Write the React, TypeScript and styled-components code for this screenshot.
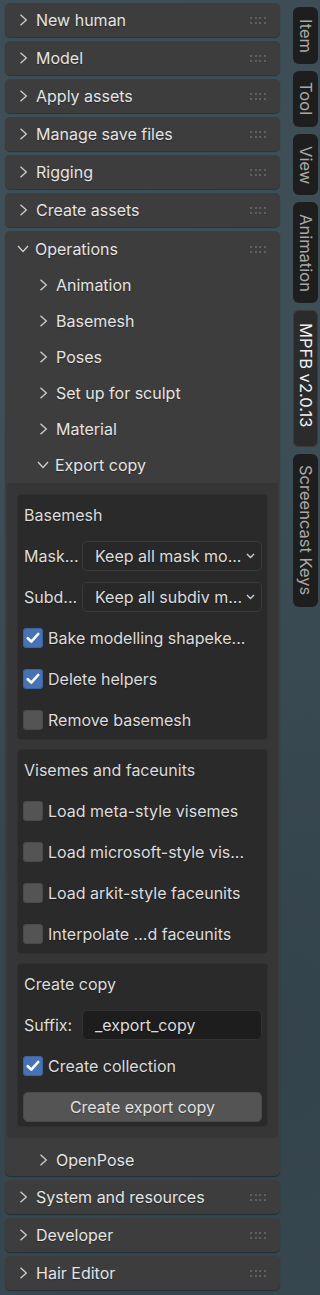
import React from 'react';
import styled, { createGlobalStyle } from 'styled-components';

const GlobalStyle = createGlobalStyle`
  body {
    margin: 0;
    background: #3a4a53;
    font-family: Inter, "Noto Sans", sans-serif;
    -webkit-font-smoothing: antialiased;
  }
`;

const Frame = styled.div`
  display: flex;
  align-items: flex-start;
  min-height: 1295px;
  padding: 3px 0 0 5px;
  box-sizing: border-box;
  background:
    radial-gradient(circle at 30% 20%, rgba(80, 100, 110, 0.25), transparent 60%),
    radial-gradient(circle at 80% 80%, rgba(40, 55, 62, 0.35), transparent 60%),
    #3a4a53;
`;

const Column = styled.div`
  display: flex;
  flex-direction: column;
  gap: 4px;
  width: 275px;
`;

const Panel = styled.section`
  background: #3d3d3d;
  border-radius: 5px;
  box-shadow: 0 1px 1px rgba(0, 0, 0, 0.35);
`;

const Header = styled.div<{ $h: number; $indent: number; $top?: number }>`
  display: flex;
  align-items: center;
  box-sizing: border-box;
  height: ${({ $h }) => $h}px;
  padding: ${({ $top = 0 }) => $top}px 14px 0 ${({ $indent }) => $indent}px;
  color: #e4e4e4;
  font-size: 16px;
  text-shadow: 0 1px 1px rgba(0, 0, 0, 0.35);
`;

const Title = styled.span<{ $open?: boolean }>`
  flex: 1;
  margin-left: ${({ $open }) => ($open ? 6 : 8)}px;
  white-space: nowrap;
`;

const Grip = styled.div`
  display: grid;
  grid-template-columns: repeat(4, 2px);
  grid-auto-rows: 2px;
  column-gap: 2.7px;
  row-gap: 3.5px;
  margin-top: 1px;
  span {
    background: #6c6c6c;
    border-radius: 1px;
  }
`;

const SubBody = styled.div`
  display: flex;
  flex-direction: column;
  gap: 9px;
  margin: 0 2px;
  padding: 11px 10px 11px;
  background: #363636;
  border-radius: 0 0 4px 4px;
`;

const Box = styled.div`
  display: flex;
  flex-direction: column;
  background: #2a2a2a;
  border-radius: 5px;
  box-shadow: inset 0 0 0 1px #303030;
  padding: 0 6px 0 7px;
`;

const Row = styled.div`
  display: flex;
  align-items: center;
  height: 41px;
  color: #dcdcdc;
  font-size: 16px;
  white-space: nowrap;
  text-shadow: 0 1px 1px rgba(0, 0, 0, 0.3);
`;

const Label = styled.span`
  width: 58px;
  flex: none;
`;

const Field = styled.div<{ $dark?: boolean }>`
  flex: 1;
  display: flex;
  align-items: center;
  height: 28px;
  padding: 0 6px 0 12px;
  background: ${({ $dark }) => ($dark ? '#1d1d1d' : '#282828')};
  border: 1px solid ${({ $dark }) => ($dark ? '#333' : '#3a3a3a')};
  border-radius: 5px;
  color: #dcdcdc;
  span {
    flex: 1;
  }
`;

const CheckBox = styled.span<{ $on?: boolean }>`
  display: flex;
  align-items: center;
  justify-content: center;
  width: 20px;
  height: 20px;
  margin: 0 5px 0 -1px;
  border-radius: 4px;
  background: ${({ $on }) => ($on ? '#4772b3' : '#545454')};
  box-shadow: inset 0 0 0 1px ${({ $on }) => ($on ? '#3d64a0' : '#4a4a4a')};
  flex: none;
`;

const Button = styled.div`
  flex: 1;
  display: flex;
  align-items: center;
  justify-content: center;
  height: 28px;
  margin-left: -1px;
  background: #545454;
  border: 1px solid #4a4a4a;
  border-radius: 5px;
  color: #e0e0e0;
`;

const Tabs = styled.nav`
  display: flex;
  flex-direction: column;
  gap: 7px;
  margin: 4px 0 0 13px;
  width: 25px;
`;

const Tab = styled.div<{ $active?: boolean }>`
  writing-mode: vertical-rl;
  display: flex;
  align-items: center;
  padding: ${({ $active }) => ($active ? '13px 0 19px' : '11.5px 0')};
  width: 25px;
  box-sizing: border-box;
  border-radius: 6px;
  font-size: 16.5px;
  line-height: 25px;
  white-space: nowrap;
  background: ${({ $active }) => ($active ? '#2b2b2b' : '#1e1e1e')};
  box-shadow: ${({ $active }) => ($active ? 'inset 0 0 0 1px #3c3c3c' : 'none')};
  color: ${({ $active }) => ($active ? '#f0f0f0' : '#a8a8a8')};
`;

const Chevron = ({ open }: { open?: boolean }) =>
  open ? (
    <svg width="12" height="8" viewBox="0 0 12 8">
      <polyline points="1,1 6,6.5 11,1" fill="none" stroke="#cfcfcf" strokeWidth="1.3" />
    </svg>
  ) : (
    <svg width="9" height="12" viewBox="0 0 9 12">
      <polyline points="1.5,0.8 7.3,6 1.5,11.2" fill="none" stroke="#cfcfcf" strokeWidth="1.3" />
    </svg>
  );

const DropArrow = () => (
  <svg width="9" height="6" viewBox="0 0 9 6">
    <polyline points="1,1 4.5,4.5 8,1" fill="none" stroke="#d0d0d0" strokeWidth="1.4" />
  </svg>
);

const Tick = () => (
  <svg width="14" height="12" viewBox="0 0 14 12">
    <polyline points="1.8,6.2 5.3,9.6 12.2,2" fill="none" stroke="#fff" strokeWidth="2.6" strokeLinecap="round" strokeLinejoin="round" />
  </svg>
);

const Dots = () => (
  <Grip>
    {Array.from({ length: 8 }).map((_, i) => (
      <span key={i} />
    ))}
  </Grip>
);

const PanelHead = ({ title, open, h = 34 }: { title: string; open?: boolean; h?: number }) => (
  <Header $h={h} $indent={open ? 12 : 14}>
    <Chevron open={open} />
    <Title $open={open}>{title}</Title>
    <Dots />
  </Header>
);

const SubHead = ({ title, open, h = 36, top }: { title: string; open?: boolean; h?: number; top?: number }) => (
  <Header $h={h} $indent={open ? 32 : 34} $top={top}>
    <Chevron open={open} />
    <Title $open={open}>{title}</Title>
  </Header>
);

const Check = ({ on, text }: { on?: boolean; text: string }) => (
  <Row>
    <CheckBox $on={on}>{on && <Tick />}</CheckBox>
    {text}
  </Row>
);

const Select = ({ label, value }: { label: string; value: string }) => (
  <Row>
    <Label>{label}</Label>
    <Field>
      <span>{value}</span>
      <DropArrow />
    </Field>
  </Row>
);

const top = ['New human', 'Model', 'Apply assets', 'Manage save files', 'Rigging', 'Create assets'];
const bottom = ['System and resources', 'Developer', 'Hair Editor'];
const subs = ['Animation', 'Basemesh', 'Poses', 'Set up for sculpt', 'Material'];
const tabs = ['Item', 'Tool', 'View', 'Animation', 'MPFB v2.0.13', 'Screencast Keys'];

export default function App() {
  return (
    <>
      <GlobalStyle />
      <Frame>
        <Column>
          {top.map((t) => (
            <Panel key={t}>
              <PanelHead title={t} />
            </Panel>
          ))}
          <Panel>
            <PanelHead title="Operations" open h={36} />
            {subs.map((s) => (
              <SubHead key={s} title={s} />
            ))}
            <SubHead title="Export copy" open />
            <SubBody>
              <Box>
                <Row>Basemesh</Row>
                <Select label="Mask..." value="Keep all mask mo..." />
                <Select label="Subd..." value="Keep all subdiv m..." />
                <Check on text="Bake modelling shapeke..." />
                <Check on text="Delete helpers" />
                <Check text="Remove basemesh" />
              </Box>
              <Box>
                <Row>Visemes and faceunits</Row>
                <Check text="Load meta-style visemes" />
                <Check text="Load microsoft-style vis..." />
                <Check text="Load arkit-style faceunits" />
                <Check text="Interpolate ...d faceunits" />
              </Box>
              <Box>
                <Row>Create copy</Row>
                <Row>
                  <Label>Suffix:</Label>
                  <Field $dark>
                    <span>_export_copy</span>
                  </Field>
                </Row>
                <Check on text="Create collection" />
                <Row>
                  <Button>Create export copy</Button>
                </Row>
              </Box>
            </SubBody>
            <SubHead title="OpenPose" h={38} top={6} />
          </Panel>
          {bottom.map((t) => (
            <Panel key={t}>
              <PanelHead title={t} />
            </Panel>
          ))}
        </Column>
        <Tabs>
          {tabs.map((t) => (
            <Tab key={t} $active={t.startsWith('MPFB')}>
              {t}
            </Tab>
          ))}
        </Tabs>
      </Frame>
    </>
  );
}
